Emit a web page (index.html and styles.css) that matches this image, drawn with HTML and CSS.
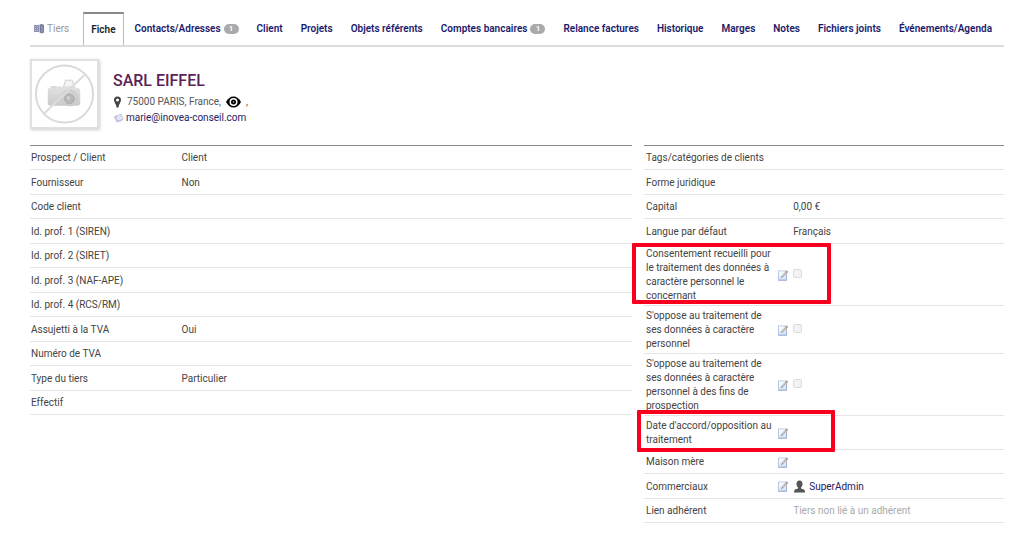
FILE: index.html
```html
<!DOCTYPE html>
<html lang="fr">
<head>
<meta charset="utf-8">
<meta name="viewport" content="width=device-width, initial-scale=1">
<title>SARL EIFFEL - Fiche tiers</title>
<link rel="stylesheet" href="styles.css">
</head>
<body>
<svg class="sprite" aria-hidden="true">
  <symbol id="i-edit" viewBox="0 0 20 22">
    <rect x="1" y="2" width="16" height="19" fill="#dbe8f8" stroke="#b9c8e0" stroke-width="2"/>
    <path d="M2 3h11L2 14z" fill="#f7faff"/>
    <path d="M2 20h15V9" fill="none" stroke="#9fb3d6" stroke-width="2"/>
    <path d="M7 15l2-4 7-8 3 2-8 8z" fill="#c9b190"/>
    <path d="M15 4l3-3 2 2-2 4z" fill="#a09aa0"/>
    <path d="M6 16l2-4 2 2z" fill="#777"/>
  </symbol>
</svg>
<main class="page">
  <nav class="tabs">
    <span class="tab tab-title">
      <svg class="icon-company" viewBox="0 0 20 20" aria-hidden="true">
        <path d="M0 2h10v14H0z" fill="#8f93b4"/><path d="M11 1l5-1 4 2v15l-4 2-5-2z" fill="#747a9e"/>
        <path d="M2 5h2M6 5h2M2 9h2M6 9h2M2 13h2M6 13h2" stroke="#b5b9d2" stroke-width="2"/>
        <path d="M16 3v14" stroke="#a6abc9" stroke-width="2"/>
      </svg>
      Tiers</span>
    <a class="tab tab-active" href="#">Fiche</a>
    <a class="tab" href="#">Contacts/Adresses <span class="badge">1</span></a>
    <a class="tab" href="#">Client</a>
    <a class="tab" href="#">Projets</a>
    <a class="tab" href="#">Objets référents</a>
    <a class="tab" href="#">Comptes bancaires <span class="badge">1</span></a>
    <a class="tab" href="#">Relance factures</a>
    <a class="tab" href="#">Historique</a>
    <a class="tab" href="#">Marges</a>
    <a class="tab" href="#">Notes</a>
    <a class="tab" href="#">Fichiers joints</a>
    <a class="tab" href="#">Événements/Agenda</a>
  </nav>

  <header class="banner">
    <div class="photo">
      <svg viewBox="0 0 64 64" role="img" aria-label="Pas de photo">
        <defs>
          <linearGradient id="body" x2="0" y2="1"><stop offset="0" stop-color="#e2e2e2"/><stop offset="1" stop-color="#cacaca"/></linearGradient>
        </defs>
        <path d="M31 25l2-7h7l2 7z" fill="#f4f4f4" stroke="#d0d0d0"/>
        <path d="M15 28q0-2 2-2h5l1-2h6l1 1h13l2 1q3 0 3 3v12q0 3-3 3H18q-3 0-3-3z" fill="url(#body)"/>
        <rect x="18" y="24" width="5" height="2" fill="#d4d4d4"/>
        <circle cx="37" cy="36" r="8" fill="#d2d2d2" stroke="#c6c6c6"/>
        <circle cx="37" cy="37" r="5" fill="#b8b8b8" stroke="#adadad"/>
        <circle cx="36" cy="36" r="2" fill="#cfcfcf"/>
        <circle cx="32" cy="32" r="29" fill="none" stroke="#dadada" stroke-width="2"/>
        <path d="M11 52L53 12" stroke="#dcdcdc" stroke-width="2"/>
      </svg>
    </div>
    <div class="identity">
      <h1 class="name">SARL EIFFEL</h1>
      <p class="line">
        <svg class="icon-pin" viewBox="0 0 16 24" aria-hidden="true"><path fill-rule="evenodd" d="M8 1a7 7 0 0 1 7 7c0 5-5 8-5 15H6C6 16 1 13 1 8a7 7 0 0 1 7-7zm0 4a3 3 0 1 0 0 6 3 3 0 0 0 0-6z" fill="#444"/></svg>
        <span class="address">75000 PARIS, France,</span>
        <svg class="icon-eye" viewBox="0 0 30 24" aria-hidden="true"><path d="M0 12Q6 1 15 1t15 11Q24 23 15 23T0 12z"/><circle cx="15" cy="12" r="8" fill="#fff"/><circle cx="15" cy="12" r="5"/><circle cx="15" cy="12" r="1.500" fill="#ccc"/></svg>
        <span class="address">,</span>
      </p>
      <p class="line line-mail">
        <svg class="icon-mail" viewBox="0 0 24 22" aria-hidden="true"><path d="M1 8l4-2 13-4 5 11-4 5-11 3z" fill="#c9c9e4"/><path d="M6 7l12-4 4 10-12 4z" fill="#eeeefa" stroke="#a9a8cf"/><path d="M6 7l9 4 3-8" fill="none" stroke="#b5b4d8"/></svg>
        <a href="mailto:marie@inovea-conseil.com">marie@inovea-conseil.com</a>
      </p>
    </div>
  </header>

  <div class="columns">
    <table class="fields fields-main">
      <tr><th scope="row">Prospect / Client</th><td>Client</td></tr>
      <tr><th scope="row">Fournisseur</th><td>Non</td></tr>
      <tr><th scope="row">Code client</th><td></td></tr>
      <tr><th scope="row">Id. prof. 1 (SIREN)</th><td></td></tr>
      <tr><th scope="row">Id. prof. 2 (SIRET)</th><td></td></tr>
      <tr><th scope="row">Id. prof. 3 (NAF-APE)</th><td></td></tr>
      <tr><th scope="row">Id. prof. 4 (RCS/RM)</th><td></td></tr>
      <tr><th scope="row">Assujetti à la TVA</th><td>Oui</td></tr>
      <tr><th scope="row">Numéro de TVA</th><td></td></tr>
      <tr><th scope="row">Type du tiers</th><td>Particulier</td></tr>
      <tr><th scope="row">Effectif</th><td></td></tr>
    </table>

    <table class="fields fields-side">
      <tr><th scope="row">Tags/catégories de clients</th><td class="edit"></td><td></td></tr>
      <tr><th scope="row">Forme juridique</th><td class="edit"></td><td></td></tr>
      <tr><th scope="row">Capital</th><td class="edit"></td><td>0,00 €</td></tr>
      <tr><th scope="row">Langue par défaut</th><td class="edit"></td><td>Français</td></tr>
      <tr class="marked"><th scope="row"><label for="consent">Consentement recueilli pour le traitement des données à caractère personnel le concernant</label><span class="frame frame-consent"></span></th><td class="edit"><a href="#" aria-label="Modifier"><svg><use href="#i-edit"/></svg></a></td><td class="choice"><input class="check" type="checkbox" id="consent" disabled></td></tr>
      <tr><th scope="row"><label for="oppose">S'oppose au traitement de ses données à caractère personnel</label></th><td class="edit"><a href="#" aria-label="Modifier"><svg><use href="#i-edit"/></svg></a></td><td class="choice"><input class="check" type="checkbox" id="oppose" disabled></td></tr>
      <tr><th scope="row"><label for="prospection">S'oppose au traitement de ses données à caractère personnel à des fins de prospection</label></th><td class="edit"><a href="#" aria-label="Modifier"><svg><use href="#i-edit"/></svg></a></td><td class="choice"><input class="check" type="checkbox" id="prospection" disabled></td></tr>
      <tr class="marked"><th scope="row">Date d'accord/opposition au traitement<span class="frame frame-date"></span></th><td class="edit"><a href="#" aria-label="Modifier"><svg><use href="#i-edit"/></svg></a></td><td></td></tr>
      <tr><th scope="row">Maison mère</th><td class="edit"><a href="#" aria-label="Modifier"><svg><use href="#i-edit"/></svg></a></td><td></td></tr>
      <tr><th scope="row">Commerciaux</th><td class="edit"><a href="#" aria-label="Modifier"><svg><use href="#i-edit"/></svg></a></td><td><a class="user" href="#"><svg class="icon-user" viewBox="0 0 24 26" aria-hidden="true"><path d="M12 1c4 0 6 3 6 7 0 3-1 5-3 7v2l6 2q2 1 2 6H1q0-5 2-6l6-2v-2c-2-2-3-4-3-7 0-4 2-7 6-7z" fill="#555"/></svg>SuperAdmin</a></td></tr>
      <tr><th scope="row">Lien adhérent</th><td class="edit"></td><td class="muted">Tiers non lié à un adhérent</td></tr>
    </table>
  </div>
</main>
</body>
</html>
```
FILE: styles.css
```css
* { box-sizing: border-box; }

body {
  margin: 0;
  background: #fff;
  color: #444;
  font: 10px/14px Roboto, "Liberation Sans", sans-serif;
}

a { color: #26205f; text-decoration: none; }

.sprite { position: absolute; width: 0; height: 0; }

.page { padding: 12px 20px 20px 30px; }

/* Tabs */
.tabs {
  display: flex;
  height: 35px;
  border-bottom: 2px solid #dcdcdc;
  white-space: nowrap;
}

.tab {
  display: flex;
  align-items: center;
  gap: 3px;
  padding: 0 9px;
  color: #1c1a6b;
  font-weight: 600;
}

.tab-title {
  padding: 0 14px 0 4px;
  color: #999;
  font-weight: 400;
}

.tab-active {
  margin-right: 2px;
  padding: 0 7px;
  border: 1px solid #bbb;
  border-top: 2px solid #888;
  border-bottom: 0;
  color: #222;
}

.icon-company { width: 10px; height: 10px; }

.badge {
  width: 15px;
  border-radius: 5px;
  background: #aaa;
  color: #fff;
  font-size: 8px;
  line-height: 10px;
  text-align: center;
}

/* Banner */
.banner {
  display: flex;
  gap: 14px;
  margin-bottom: 16px;
  padding-top: 12px;
}

.photo {
  width: 69px;
  height: 70px;
  padding: 1px;
  border: 2px solid #e0e0e0;
  box-shadow: 1px 1px 3px #ccc;
}

.photo svg { display: block; width: 100%; height: 100%; }

.identity { padding-top: 13px; }

.name {
  margin: 0 0 4px;
  color: #5c2358;
  font-size: 16px;
  font-weight: 500;
  line-height: 18px;
}

.line {
  display: flex;
  align-items: center;
  gap: 5px;
  margin: 0;
  line-height: 16px;
}

.address { color: #555; }

.line-mail { gap: 2px; }

.icon-pin { width: 9px; height: 12px; }
.icon-eye { width: 15px; height: 12px; }
.icon-mail { width: 11px; height: 10px; }

/* Field tables */
.columns {
  display: grid;
  grid-template-columns: 602fr 360fr;
  gap: 12px;
  align-items: start;
}

.fields {
  width: 100%;
  border-collapse: separate;
  border-spacing: 0;
  border-top: 1px solid #888;
  table-layout: fixed;
}

.fields tr { height: 24px; }
.fields tr:nth-child(even) { height: 25px; }

.fields th,
.fields td {
  padding: 3px 1px 2px;
  border-bottom: 1px solid #e6e6e6;
  font-weight: 400;
  text-align: left;
  vertical-align: middle;
}

.fields-main th { width: 25%; }

.fields-side th { width: 37%; padding-left: 2px; }

.fields .edit { width: 15px; padding-top: 3px; }

.edit svg { display: block; width: 10px; height: 11px; }

.fields .choice { padding-bottom: 6px; }

.check {
  display: block;
  width: 9px;
  height: 9px;
  margin: 0;
  appearance: none;
  border: 1px solid #dcdcdc;
  border-radius: 2px;
  background: #f3f3f3;
}

.user { display: flex; align-items: center; gap: 3px; }

.icon-user { width: 13px; height: 13px; }

.fields .muted { color: #aaa; }

/* Highlight frames drawn over the rows */
.marked { position: relative; }

.frame {
  position: absolute;
  border: 4px solid #f8001d;
  border-radius: 1px;
  pointer-events: none;
}

.frame-consent { top: -1px; left: -12px; width: 199px; height: 61px; }
.frame-date { top: -6px; left: -7px; width: 198px; height: 42px; }
```
